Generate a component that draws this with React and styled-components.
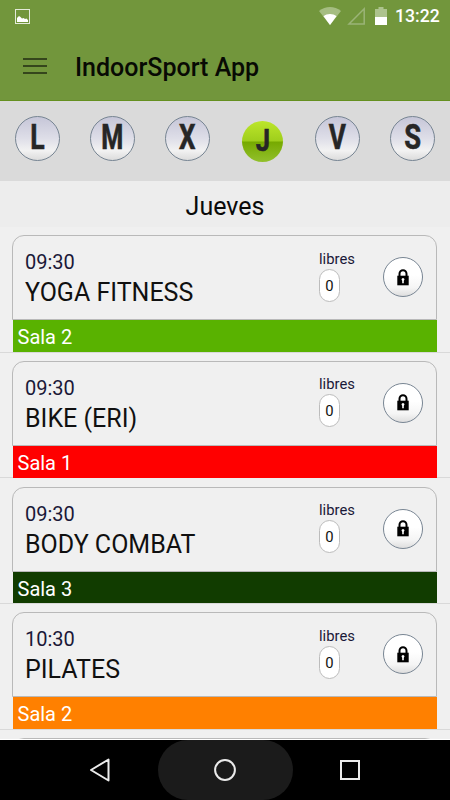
import React, { useState } from 'react';
import styled, { createGlobalStyle, css } from 'styled-components';

const GlobalStyle = createGlobalStyle`
  body {
    margin: 0;
    font-family: Roboto, "Liberation Sans", sans-serif;
    background: #f0f0f0;
  }

  * {
    box-sizing: border-box;
  }
`;

const Screen = styled.div`
  display: flex;
  flex-direction: column;
  width: 450px;
  height: 800px;
  overflow: hidden;
  background: #f0f0f0;
`;

const Header = styled.header`
  height: 101px;
  background: #72963c;
  border-bottom: 1px solid #659020;
`;

const StatusBar = styled.div`
  display: flex;
  align-items: center;
  height: 32px;
  padding: 0 10px 0 15px;
  color: #fff;

  svg {
    display: block;
  }
`;

const StatusIcons = styled.div`
  display: flex;
  align-items: center;
  margin-left: auto;
`;

const SignalGap = styled.span`
  margin: 0 9px 0 6px;
`;

const Clock = styled.span`
  width: 45px;
  margin-left: 8px;
  font-size: 17.6px;
  font-weight: 500;
  line-height: 33px;
  white-space: nowrap;
`;

const Toolbar = styled.div`
  display: flex;
  align-items: center;
  height: 68px;
  padding: 4px 0 0 23px;
`;

const MenuButton = styled.button`
  display: flex;
  flex-direction: column;
  gap: 5px;
  width: 24px;
  margin: 0 28px 4px 0;
  padding: 0;
  border: 0;
  background: none;

  span {
    height: 2px;
    background: #35461c;
  }
`;

const Title = styled.h1`
  margin: 0;
  font-size: 25px;
  font-weight: 500;
  line-height: 32px;
  color: #080a04;
`;

const Days = styled.nav`
  display: flex;
  height: 80px;
  padding-top: 15px;
  background: #dadada;
`;

const DaySlot = styled.div`
  display: flex;
  justify-content: center;
  width: 75px;
`;

const DayButton = styled.button`
  display: flex;
  align-items: center;
  justify-content: center;
  width: 45px;
  height: 45px;
  padding: 0;
  border: 1px solid #768492;
  border-radius: 50%;
  background: linear-gradient(#c6c6d8, #dedee8 50%, #f2f2f2 78%, #dcdcdc);
  color: #262626;
  font-family: inherit;
  font-size: 35px;
  font-weight: 700;
  line-height: 41px;

  span {
    display: block;
    margin-top: -2px;
    transform: scaleX(${({ $squeeze }) => $squeeze});
    -webkit-text-stroke: 0.6px #262626;
  }

  ${({ $active }) => $active && css`
    width: 41px;
    height: 41px;
    margin-top: 5px;
    border: 0;
    background: linear-gradient(#bce62a, #9fce1c 49%, #76a900 51%, #92c02c);
    font-size: 32px;
  `}
`;

const DayTitle = styled.h2`
  height: 46px;
  margin: 0;
  background: #ededed;
  font-size: 25px;
  font-weight: 400;
  line-height: 51px;
  text-align: center;
  color: #0a0a0a;
`;

const List = styled.main`
  flex: 1;
  min-height: 0;
  overflow: hidden;
  border-bottom: 1px solid #fff;
`;

const Row = styled.article`
  height: 125.67px;
  padding: 8.3px 13px 0 12px;
  border-bottom: 1px solid #d9d9d9;
`;

const Card = styled.div`
  display: flex;
  height: 85px;
  padding-left: 12px;
  border: 1px solid #b9b9b9;
  border-radius: 12px 12px 0 0;
`;

const Info = styled.div`
  width: 294px;
  padding-top: 13px;
`;

const Time = styled.div`
  font-size: 20px;
  line-height: 26px;
  color: #1a1838;
`;

const Name = styled.div`
  margin-top: 2px;
  font-size: 25px;
  line-height: 32px;
  white-space: nowrap;
  color: #101010;
`;

const Free = styled.div`
  width: 64px;
  padding-top: 12.5px;
  font-size: 14.8px;
  line-height: 20px;
  color: #1a1838;
`;

const Count = styled.div`
  width: 21px;
  height: 33px;
  border: 1px solid #bcbcbc;
  border-radius: 11px;
  background: #fff;
  line-height: 33px;
  text-align: center;
  color: #111;
`;

const LockButton = styled.button`
  display: flex;
  align-items: center;
  justify-content: center;
  width: 40px;
  height: 40px;
  margin-top: 21px;
  padding: 0;
  border: 1px solid #788593;
  border-radius: 50%;
  background: linear-gradient(#fff 45%, #f5f5f5 78%, #dedede);
`;

const Room = styled.div`
  height: 31.7px;
  margin-left: 1px;
  padding-left: 4.5px;
  background: ${({ $color }) => $color};
  color: #fff;
  font-size: 20px;
  line-height: 35px;
`;

const NavBar = styled.footer`
  display: flex;
  align-items: center;
  justify-content: center;
  height: 60px;
  background: #000;
`;

const NavButton = styled.button`
  display: flex;
  align-items: center;
  justify-content: center;
  width: ${({ $wide }) => ($wide ? '135px' : '115px')};
  height: 60px;
  padding: 0;
  border: 0;
  border-radius: 30px;
  background: ${({ $wide }) => ($wide ? '#1b1b1b' : 'none')};
`;

const PictureIcon = () => (
  <svg width="15" height="15" viewBox="0 0 15 15">
    <rect x=".5" y=".5" width="14" height="14" fill="none" stroke="#e3ead9" />
    <path d="M2 13V9l2-2 1.5 1 1.5 1.5L8.5 9l1.5 1 1.5-.5L13 11v2z" fill="#fff" />
  </svg>
);

const WifiIcon = () => (
  <svg width="22" height="18" viewBox="0 0 22 18">
    <path d="M0 4C6.5-1.2 15.5-1.2 22 4L11 18z" fill="#a5bd82" />
    <path d="M4.5 9.2C8 6.4 14 6.4 17.5 9.2L11 18z" fill="#fff" />
  </svg>
);

const SignalIcon = () => (
  <svg width="19" height="18" viewBox="0 0 19 18">
    <path d="M2 17H17.2V1.8z" fill="none" stroke="#9bb477" strokeWidth="1.5" />
  </svg>
);

const BatteryIcon = () => (
  <svg width="12" height="18" viewBox="0 0 12 18">
    <path d="M0 2h3.5V0h5v2H12v8H0z" fill="#adc38d" />
    <path d="M0 10h12v8H0z" fill="#fff" />
  </svg>
);

const LockIcon = () => (
  <svg width="12" height="17" viewBox="0 0 12 17">
    <path d="M2.5 7.5V4.7a3.5 3.5 0 0 1 7 0v2.8" fill="none" stroke="#000" strokeWidth="2" />
    <rect x=".3" y="6.7" width="11.4" height="9.6" fill="#000" />
    <path d="M5.2 14.2v-2.5a1.4 1.4 0 1 1 1.6 0v2.5z" fill="#fff" />
  </svg>
);

const BackIcon = () => (
  <svg width="22" height="24" viewBox="0 0 22 24">
    <path d="M19.5 1.5v21L2 12z" fill="none" stroke="#ebebeb" strokeWidth="2" strokeLinejoin="round" />
  </svg>
);

const HomeIcon = () => (
  <svg width="22" height="22" viewBox="0 0 22 22">
    <circle cx="11" cy="11" r="9.9" fill="none" stroke="#ebebeb" strokeWidth="2" />
  </svg>
);

const RecentIcon = () => (
  <svg width="20" height="20" viewBox="0 0 20 20">
    <rect x="1" y="1" width="18" height="18" fill="none" stroke="#ebebeb" strokeWidth="2" />
  </svg>
);

const days = [
  { letter: 'L', name: 'Lunes', squeeze: 0.76 },
  { letter: 'M', name: 'Martes', squeeze: 0.72 },
  { letter: 'X', name: 'Miércoles', squeeze: 0.74 },
  { letter: 'J', name: 'Jueves', squeeze: 0.8 },
  { letter: 'V', name: 'Viernes', squeeze: 0.75 },
  { letter: 'S', name: 'Sábado', squeeze: 0.78 },
];

const sessions = [
  { time: '09:30', name: 'YOGA FITNESS', room: 'Sala 2', color: '#59b200' },
  { time: '09:30', name: 'BIKE (ERI)', room: 'Sala 1', color: '#ff0000' },
  { time: '09:30', name: 'BODY COMBAT', room: 'Sala 3', color: '#113c00' },
  { time: '10:30', name: 'PILATES', room: 'Sala 2', color: '#ff8000' },
];

const Session = ({ time, name, room, color }) => (
  <Row>
    <Card>
      <Info>
        <Time>{time}</Time>
        <Name>{name}</Name>
      </Info>
      <Free>
        libres
        <Count>0</Count>
      </Free>
      <LockButton aria-label="Reservar">
        <LockIcon />
      </LockButton>
    </Card>
    <Room $color={color}>{room}</Room>
  </Row>
);

const App = () => {
  const [day, setDay] = useState(days[3]);

  return (
    <Screen>
      <GlobalStyle />
      <Header>
        <StatusBar>
          <PictureIcon />
          <StatusIcons>
            <WifiIcon />
            <SignalGap><SignalIcon /></SignalGap>
            <BatteryIcon />
            <Clock>13:22</Clock>
          </StatusIcons>
        </StatusBar>
        <Toolbar>
          <MenuButton aria-label="Menú">
            <span />
            <span />
            <span />
          </MenuButton>
          <Title>IndoorSport App</Title>
        </Toolbar>
      </Header>

      <Days>
        {days.map((d) => (
          <DaySlot key={d.letter}>
            <DayButton $active={d === day} $squeeze={d.squeeze} onClick={() => setDay(d)}>
              <span>{d.letter}</span>
            </DayButton>
          </DaySlot>
        ))}
      </Days>
      <DayTitle>{day.name}</DayTitle>

      <List>
        {sessions.map((s) => (
          <Session key={s.time + s.name} {...s} />
        ))}
        {/* next session, cut off by the navigation bar */}
        <Row>
          <Card />
        </Row>
      </List>

      <NavBar>
        <NavButton aria-label="Atrás"><BackIcon /></NavButton>
        <NavButton $wide aria-label="Inicio"><HomeIcon /></NavButton>
        <NavButton aria-label="Recientes"><RecentIcon /></NavButton>
      </NavBar>
    </Screen>
  );
};

export default App;
